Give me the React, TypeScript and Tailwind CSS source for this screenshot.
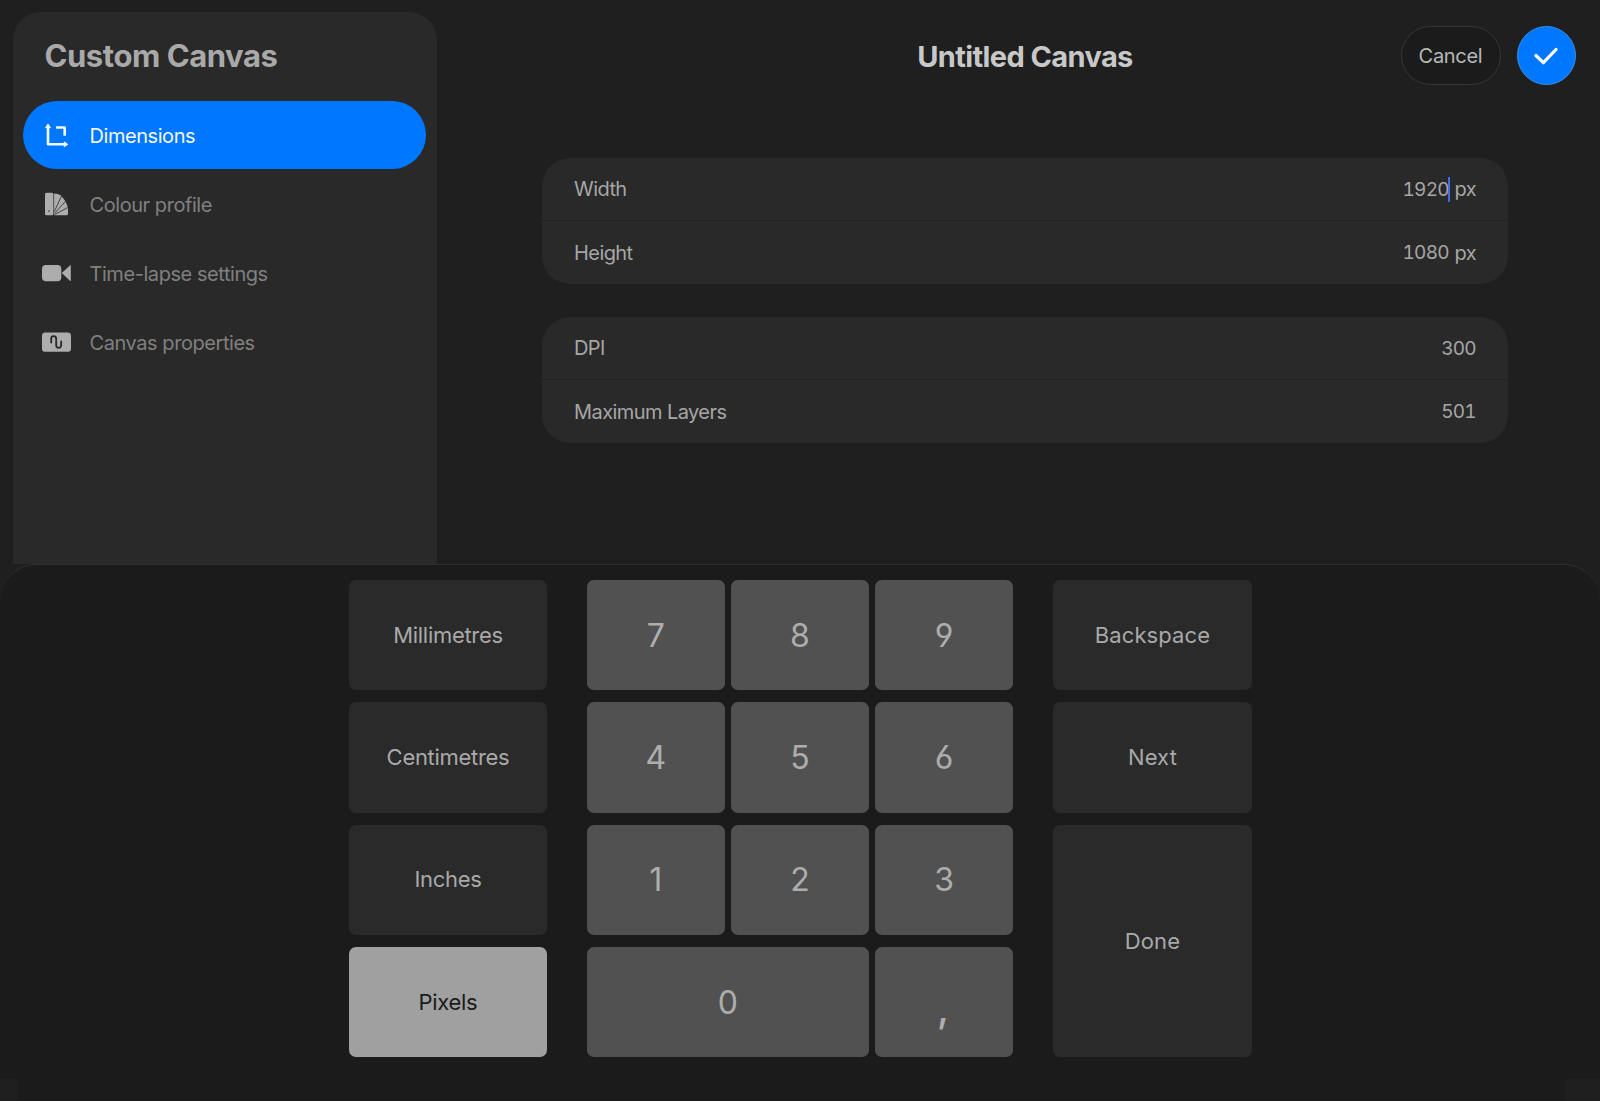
import { useState, type ReactNode } from 'react'

function DimensionsIcon() {
  return (
    <svg className="h-[30px] w-[30px]" viewBox="0 0 30 30" fill="none" stroke="currentColor" strokeWidth="2.6">
      <path d="M7 7v17.300h17" strokeLinejoin="round" />
      <path d="M15 7.500h8.700v8.300" strokeLinejoin="round" />
      <path d="M7 4l2.400 3.700H4.600zM26.800 24.300L23.200 21.900v4.800z" fill="currentColor" strokeWidth="1" strokeLinejoin="round" />
    </svg>
  )
}

function ColourIcon() {
  return (
    <svg className="h-[30px] w-[30px]" viewBox="0 0 30 30" fill="currentColor">
      <rect x="4" y="3.700" width="8.400" height="22.600" rx="1.500" />
      <path d="M13.100 4.600c2.600.1 4.900.8 6.900 2l4.300 5.400 2.700 6.500v6.300a1.500 1.500 0 01-1.500 1.500H13.100z" />
      <g fill="none" stroke="#292929" strokeWidth=".8">
        <path d="M13.300 22.500L20.800 6.500M13.500 24.300L25 11.800M13.500 25.500L27.500 18.200" />
      </g>
      <circle cx="8" cy="22" r=".8" fill="#292929" />
    </svg>
  )
}

function VideoIcon() {
  return (
    <svg className="h-[30px] w-[30px]" viewBox="0 0 30 30" fill="currentColor">
      <rect x="1" y="7" width="19.300" height="16.300" rx="4" />
      <path d="M20.800 15.100l8.100-7.600a.5.500 0 01.900.4v14.400a.5.500 0 01-.9.400z" />
    </svg>
  )
}

function CanvasIcon() {
  return (
    <svg className="h-[30px] w-[30px]" viewBox="0 0 30 30">
      <rect x="1" y="5.400" width="29" height="19.400" rx="3.400" fill="currentColor" />
      <path d="M10.200 15.500v-3.800a2.500 2.500 0 015 0v6.600a2.500 2.500 0 005 0v-3.800" fill="none" stroke="#292929" strokeWidth="1.800" strokeLinecap="round" />
    </svg>
  )
}

const SECTIONS: { id: string; label: string; icon: ReactNode }[] = [
  { id: 'dimensions', label: 'Dimensions', icon: <DimensionsIcon /> },
  { id: 'colour', label: 'Colour profile', icon: <ColourIcon /> },
  { id: 'timelapse', label: 'Time-lapse settings', icon: <VideoIcon /> },
  { id: 'canvas', label: 'Canvas properties', icon: <CanvasIcon /> },
]

const UNITS = ['Millimetres', 'Centimetres', 'Inches', 'Pixels']
const DIGITS = ['7', '8', '9', '4', '5', '6', '1', '2', '3', '0', ',']

function Sidebar() {
  const [active, setActive] = useState('dimensions')
  return (
    <aside className="ml-[13px] mt-3 w-[424px] shrink-0 rounded-t-[28px] bg-[#292929] px-[10px]">
      <h1 className="flex h-[89px] items-center pb-px pl-[21.5px] text-[31px] font-bold tracking-[-0.44px] text-[#a9a9a9]">Custom Canvas</h1>
      <nav className="flex flex-col gap-px">
        {SECTIONS.map((s) => (
          <button key={s.id} onClick={() => setActive(s.id)}
            className={`flex h-[68px] w-[403px] items-center gap-[18.5px] rounded-full pl-[18px] text-left text-[20px] tracking-[-0.44px] ${s.id === active ? 'bg-[#0077ff] text-[#f4f8ff]' : 'text-[#adadad]'}`}>
            {s.icon}
            <span className={`pt-px ${s.id === active ? '' : 'text-[#808080]'}`}>{s.label}</span>
          </button>
        ))}
      </nav>
    </aside>
  )
}

function Row({ label, value, unit, editing }: { label: string; value: string; unit?: string; editing?: boolean }) {
  return (
    <div className="flex h-[63px] items-center justify-between px-8 text-[20px] text-[#a6a6a6]">
      <span className="tracking-[-0.57px]">{label}</span>
      <span className="flex items-center">
        <span className="pt-[2px] text-[19px] tabular-nums tracking-[-0.7px]">{value}</span>
        {editing && <span className="-ml-px -mr-px h-[25px] w-[2px] bg-[#4169e8]" />}
        {unit && <span className="ml-[5.5px] tracking-[-0.6px]">{unit}</span>}
      </span>
    </div>
  )
}

function Group({ children }: { children: ReactNode }) {
  return <div className="h-[126px] w-[966px] divide-y divide-[#202020] rounded-[28px] bg-[#292929]">{children}</div>
}

function Key({ children, onClick, className = '' }: { children: ReactNode; onClick?: () => void; className?: string }) {
  return <button onClick={onClick} className={`flex items-center justify-center rounded-[7px] ${className}`}>{children}</button>
}

const textKey = 'bg-[#2a2a2a] text-[#a9a9a9]'

function Keypad() {
  const [unit, setUnit] = useState('Pixels')
  return (
    <section className="flex h-[537px] flex-col justify-between rounded-t-[36px] border-t border-[#303030] bg-[#1b1b1b] pt-[15px]">
      <div className="ml-[349px] flex h-[477.4px] text-[22px]">
        <div className="grid w-[198px] grid-rows-4 gap-y-3 tracking-[-0.3px]">
          {UNITS.map((u) => (
            <Key key={u} onClick={() => setUnit(u)} className={u === unit ? 'bg-[#a0a0a0] text-[#1b1b1b]' : textKey}>{u}</Key>
          ))}
        </div>
        {/* cv03/cv04: straight-sided six and nine */}
        <div className="ml-10 grid w-[426px] grid-cols-3 grid-rows-4 gap-x-[6.5px] gap-y-3 text-[32px] text-[#adadad] [font-feature-settings:'cv03','cv04']">
          {DIGITS.map((d) => (
            <Key key={d} className={`bg-[#515151] ${d === '0' ? 'col-span-2' : ''} ${d === ',' ? 'pr-[2px] pt-[12px] text-[40px] font-medium' : 'pt-px'}`}>{d}</Key>
          ))}
        </div>
        <div className="ml-10 grid w-[199px] grid-rows-4 gap-y-3 tracking-[0.1px]">
          <Key className={textKey}>Backspace</Key>
          <Key className={textKey}>Next</Key>
          <Key className={`row-span-2 ${textKey}`}>Done</Key>
        </div>
      </div>
      <div className="flex h-[22px] justify-between">
        <div className="w-[18px] bg-[#1f1f1f]" />
        <div className="w-[35px] bg-[#1f1f1f]" />
      </div>
    </section>
  )
}

export default function App() {
  return (
    <div className="flex h-[1101px] w-[1600px] flex-col overflow-hidden bg-[#1f1f1f] font-['Inter',sans-serif]">
      <div className="flex h-[564px]">
        <Sidebar />
        <main className="flex grow flex-col pl-[105px]">
          <header className="grid h-[110px] grid-cols-[966px_1fr] items-center">
            <h2 className="pt-1 text-center text-[29px] font-bold tracking-[-0.62px] text-[#c8c8c8]">Untitled Canvas</h2>
          </header>
          <div className="mt-[48px] flex flex-col gap-[33px]">
            <Group>
              <Row label="Width" value="1920" unit="px" editing />
              <Row label="Height" value="1080" unit="px" />
            </Group>
            <Group>
              <Row label="DPI" value="300" />
              <Row label="Maximum Layers" value="501" />
            </Group>
          </div>
        </main>
        <div className="absolute left-[1400.5px] top-[25.5px] flex gap-4">
          <button className="h-[59px] w-[100px] rounded-full border border-[#363636] bg-[#1b1b1b] pt-px text-[20px] tracking-[-0.3px] text-[#b8b8b8]">Cancel</button>
          <button className="grid h-[59px] w-[59px] place-items-center rounded-full border border-[#3a8fe8] bg-[#0077ff]" aria-label="Confirm">
            <svg className="h-[26px] w-[26px]" viewBox="0 0 26 26" fill="none" stroke="#fff" strokeWidth="3.200" strokeLinecap="round" strokeLinejoin="round"><path d="M2.900 13.500l7.500 7.200L23 7.500" /></svg>
          </button>
        </div>
      </div>
      <Keypad />
    </div>
  )
}
